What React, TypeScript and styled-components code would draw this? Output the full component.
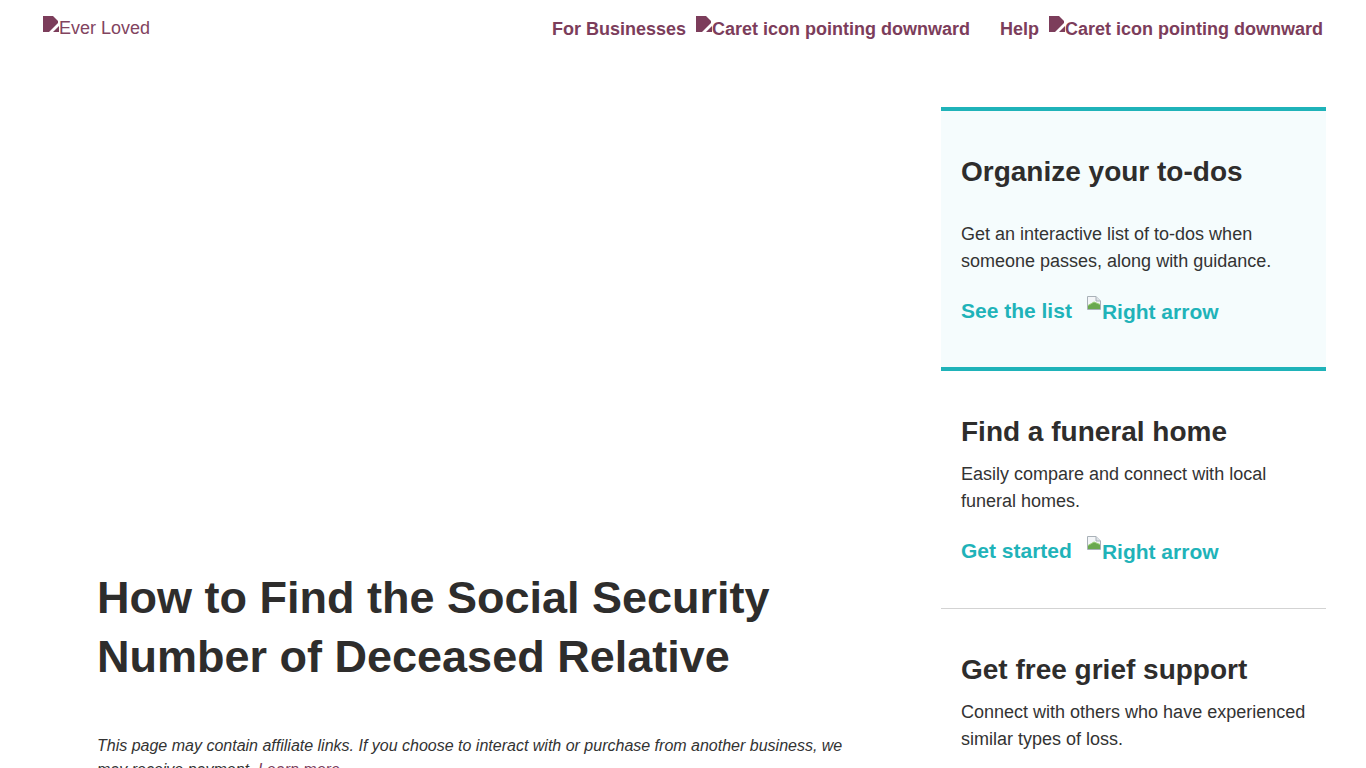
import React from 'react'
import styled, { createGlobalStyle } from 'styled-components'

const GlobalStyle = createGlobalStyle`
  html, body {
    margin: 0;
    padding: 0;
    background: #ffffff;
    font-family: 'Liberation Sans', Arial, sans-serif;
    color: #333333;
  }
  * {
    box-sizing: border-box;
  }
`

const PURPLE = '#7c3d5b'
const TEAL = '#1fb3b9'

/**
 * broken image glyphs (the page shows alt text for missing pictures)
 */
const TintedBroken = ({ color }: { color: string }) => (
  <BrokenIcon width='16' height='16' viewBox='0 0 16 16'>
    <path d='M0 0 H10 L15 5 V7 L6 16 H0 Z' fill={color} />
    <path d='M10 16 L16 10 V16 Z' fill={color} />
  </BrokenIcon>
)

const PlainBroken = () => (
  <BrokenIcon width='16' height='16' viewBox='0 0 16 16'>
    <path d='M1.5 1.5 H10 L14.5 6 V14.5 H1.5 Z' fill='#f4f6f8' stroke='#a9b1b8' />
    <path d='M10 1.5 V6 H14.5' fill='#dde2e6' stroke='#a9b1b8' />
    <path d='M2 14 L2 10.5 L8 7 L14 9.5 V14 Z' fill='#6aa84f' />
    <path d='M2 10.5 L8 7 L14 9.5' fill='none' stroke='#9ccf7a' />
  </BrokenIcon>
)

interface ICard {
  title: string
  text: string
  link?: string
  highlighted?: boolean
}

const cards: ICard[] = [
  {
    title: 'Organize your to-dos',
    text: 'Get an interactive list of to-dos when someone passes, along with guidance.',
    link: 'See the list',
    highlighted: true,
  },
  {
    title: 'Find a funeral home',
    text: 'Easily compare and connect with local funeral homes.',
    link: 'Get started',
  },
  {
    title: 'Get free grief support',
    text: 'Connect with others who have experienced similar types of loss.',
  },
]

const App = () => {
  return (
    <>
      <GlobalStyle />
      <StyledHeader>
        <StyledLogo>
          <TintedBroken color={PURPLE} />
          Ever Loved
        </StyledLogo>
        <StyledNav>
          <StyledNavItem>
            For Businesses
            <StyledCaret>
              <TintedBroken color={PURPLE} />
              Caret icon pointing downward
            </StyledCaret>
          </StyledNavItem>
          <StyledNavItem>
            Help
            <StyledCaret>
              <TintedBroken color={PURPLE} />
              Caret icon pointing downward
            </StyledCaret>
          </StyledNavItem>
        </StyledNav>
      </StyledHeader>

      <StyledLayout>
        <StyledMain>
          <StyledHero />
          <StyledTitle>How to Find the Social Security Number of Deceased Relative</StyledTitle>
          <StyledDisclaimer>
            This page may contain affiliate links. If you choose to interact with or purchase from
            another business, we may receive payment. <a href='#'>Learn more</a>
          </StyledDisclaimer>
        </StyledMain>

        <StyledSidebar>
          {cards.map((card, i) => (
            <StyledCard key={card.title} highlighted={card.highlighted} last={i === cards.length - 1}>
              <StyledCardTitle>{card.title}</StyledCardTitle>
              <StyledCardText highlighted={card.highlighted}>{card.text}</StyledCardText>
              {card.link && (
                <StyledCardLink href='#'>
                  {card.link}
                  <StyledArrow>
                    <PlainBroken />
                    Right arrow
                  </StyledArrow>
                </StyledCardLink>
              )}
            </StyledCard>
          ))}
        </StyledSidebar>
      </StyledLayout>
    </>
  )
}

export default App

const BrokenIcon = styled.svg`
  display: inline-block;
  flex-shrink: 0;
  width: 16px;
  height: 16px;
  align-self: flex-start;
  margin-top: -2px;
`

const StyledHeader = styled.header`
  display: flex;
  align-items: center;
  justify-content: space-between;
  height: 56px;
  padding: 2px 43px 0 43px;
`

const StyledLogo = styled.a`
  display: flex;
  align-items: flex-start;
  font-size: 18px;
  line-height: 20px;
  color: #82445f;
  margin-top: -2px;
`

const StyledNav = styled.nav`
  display: flex;
  align-items: center;
  gap: 30px;
`

const StyledNavItem = styled.div`
  display: flex;
  align-items: flex-start;
  gap: 10px;
  font-size: 18px;
  line-height: 22px;
  font-weight: 700;
  color: ${PURPLE};
`

const StyledCaret = styled.span`
  display: flex;
  align-items: flex-start;
`

const StyledLayout = styled.div`
  display: grid;
  grid-template-columns: 1fr 385px;
  column-gap: 40px;
  padding: 0 40px;
`

const StyledMain = styled.main`
  padding: 0 40px 0 57px;
`

const StyledHero = styled.div`
  height: 512px;
`

const StyledTitle = styled.h1`
  margin: 0;
  font-size: 45px;
  line-height: 59px;
  font-weight: 700;
  color: #2e2d2c;
`

const StyledDisclaimer = styled.p`
  margin: 48px 0 0;
  font-size: 16px;
  line-height: 24px;
  font-style: italic;
  color: #333333;

  a {
    color: ${PURPLE};
    text-decoration: underline;
  }
`

const StyledSidebar = styled.aside`
  margin-top: 51px;
  display: flex;
  flex-direction: column;
`

const StyledCard = styled.section<{ highlighted?: boolean; last?: boolean }>`
  padding: 44px 20px ${({ highlighted }) => (highlighted ? '41px' : '42px')};
  background: ${({ highlighted }) => (highlighted ? '#f5fcfd' : '#ffffff')};
  border-top: ${({ highlighted }) => (highlighted ? `4px solid ${TEAL}` : 'none')};
  border-bottom: ${({ highlighted, last }) =>
    highlighted ? `4px solid ${TEAL}` : last ? 'none' : '1px solid #d3d3d3'};
`

const StyledCardTitle = styled.h2`
  margin: 0;
  font-size: 28px;
  line-height: 34px;
  font-weight: 700;
  color: #2e2d2c;
`

const StyledCardText = styled.p<{ highlighted?: boolean }>`
  margin: ${({ highlighted }) => (highlighted ? '32px' : '12px')} 0 0;
  font-size: 18px;
  line-height: 27px;
  color: #333333;
`

const StyledCardLink = styled.a`
  display: flex;
  align-items: flex-start;
  gap: 14px;
  margin-top: 22px;
  font-size: 21px;
  line-height: 28px;
  font-weight: 700;
  color: ${TEAL};
  text-decoration: none;
`

const StyledArrow = styled.span`
  display: flex;
  align-items: flex-start;
  padding-top: 1px;
  line-height: 28px;

  svg {
    margin-top: -3px;
  }
`
